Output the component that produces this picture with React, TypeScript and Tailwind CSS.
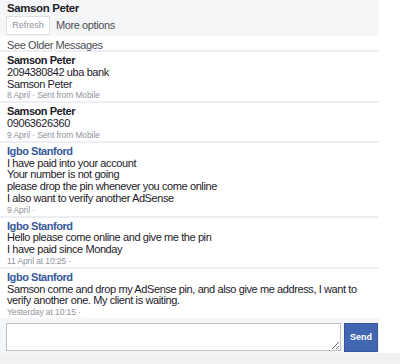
const messages = [
  {name: "Samson Peter", own: true, lines: ["2094380842 uba bank", "Samson Peter"], meta: "8 April · Sent from Mobile"},
  {name: "Samson Peter", own: true, lines: ["09063626360"], meta: "9 April · Sent from Mobile"},
  {
    name: "Igbo Stanford",
    own: false,
    lines: [
      "I have paid into your account",
      "Your number is not going",
      "please drop the pin whenever you come online",
      "I also want to verify another AdSense",
    ],
    meta: "9 April ·",
  },
  {name: "Igbo Stanford", own: false, lines: ["Hello please come online and give me the pin", "I have paid since Monday"], meta: "11 April at 10:25 ·"},
  {
    name: "Igbo Stanford",
    own: false,
    lines: ["Samson come and drop my AdSense pin, and also give me address, I want to verify another one. My client is waiting."],
    meta: "Yesterday at 10:15 ·",
  },
];

export default function App() {
  return (
    <div className="w-[400px] h-[364px] bg-white overflow-hidden flex flex-col font-['Liberation_Sans',Arial,sans-serif] text-[#1d2129]">
      <div className="w-[379px] flex flex-col shrink-0">
        <div className="bg-[#f5f6f7] px-[7px] pt-[1px] h-[36px]">
          <div className="text-[11.5px] font-bold leading-[14px] tracking-[-0.4px]">Samson Peter</div>
          <div className="flex items-center gap-[6px] mt-[1px]">
            <button className="h-[19px] w-[44px] ml-[-1px] bg-white border border-[#dddfe2] text-[9px] text-[#90949c] leading-none">
              Refresh
            </button>
            <span className="text-[11px] tracking-[-0.4px] text-[#4b4f56]">More options</span>
          </div>
        </div>
        <div className="px-[7px] pt-[2px] text-[11px] tracking-[-0.4px] leading-[14px] h-[16px] text-[#4b4f56] border-b-2 border-[#eceef1]">
          See Older Messages
        </div>
        {messages.map((m, i) => (
          <div
            key={i}
            className={"px-[7px] pt-[3px] pb-[1px] " + (i < messages.length - 1 ? "border-b-2 border-[#eceef1]" : "")}
          >
            <div
              className={
                "text-[11px] font-bold leading-[11.75px] tracking-[-0.45px] " + (m.own ? "text-[#1d2129]" : "text-[#365899]")
              }
            >
              {m.name}
            </div>
            {m.lines.map((l, j) => (
              <div key={j} className="text-[11px] leading-[11.75px] tracking-[-0.4px]">
                {l}
              </div>
            ))}
            <div className="text-[8.5px] leading-[10px] tracking-[-0.1px] text-[#90949c]">{m.meta}</div>
          </div>
        ))}
        <div className="bg-[#f5f6f7] flex items-start gap-[3px] pl-[6px] pt-[5px] h-[35px]">
          <textarea className="w-[335px] h-[28px] bg-white border border-[#bec3c9] resize-y" />
          <button className="w-[34px] h-[29px] bg-[#4267b2] border border-[#365899] text-white text-[9px] font-bold">
            Send
          </button>
        </div>
      </div>
      <div className="flex-1 bg-[#f1f1f1]" />
    </div>
  );
}
